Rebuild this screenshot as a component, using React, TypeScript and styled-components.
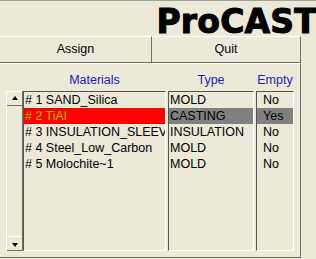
import styled, { createGlobalStyle } from "styled-components"

const Global = createGlobalStyle`
  html, body {
    margin: 0;
    padding: 0;
    background: #ece9d8;
    overflow: hidden;
  }
`

const Window = styled.div`
  width: 316px;
  height: 259px;
  box-sizing: border-box;
  border-top: 1px solid #a0a0a0;
  background: #ece9d8;
  font-family: "Liberation Sans", Arial, sans-serif;
  font-size: 12.5px;
  color: #000;
  overflow: hidden;
`

const Header = styled.div`
  height: 35px;
  display: flex;
  justify-content: flex-end;
  align-items: flex-end;
`

const Logo = styled.div`
  font-family: "DejaVu Sans", sans-serif;
  font-weight: 700;
  font-size: 33px;
  line-height: 33px;
  margin-bottom: -2px;
  margin-right: -1px;
  -webkit-text-stroke: 1px #000;
  letter-spacing: 0.2px;
  white-space: nowrap;
`

const ButtonBar = styled.div`
  width: 301px;
  display: flex;
`

const Button = styled.div<{ $w: number }>`
  width: ${(p) => p.$w}px;
  height: 27px;
  box-sizing: border-box;
  border-top: 1px solid #fff;
  border-bottom: 1px solid #716f64;
  border-right: 1px solid #716f64;
  display: flex;
  align-items: center;
  justify-content: center;
  padding-bottom: 1px;
`

const Panel = styled.div`
  width: 301px;
  height: 195px;
  box-sizing: border-box;
  border-top: 1px solid #fff;
  border-right: 1px solid #716f64;
  border-bottom: 1px solid #716f64;
  padding: 0 0 6px 6px;
  display: grid;
  grid-template-columns: 17px 143px 88px 40px;
  grid-template-rows: 27px 160px;
`

const Label = styled.div<{ $col: number; $inset?: number }>`
  grid-row: 1;
  grid-column: ${(p) => p.$col};
  margin-left: ${(p) => p.$inset ?? 0}px;
  color: #1c1cb4;
  text-align: center;
  padding-top: 9px;
  line-height: 14px;
`

const ScrollBar = styled.div`
  grid-row: 2;
  grid-column: 1;
  display: flex;
  flex-direction: column;
  box-sizing: border-box;
  border-left: 1px solid #fff;
  border-right: 1px solid #716f64;
`

const ScrollButton = styled.div<{ $down?: boolean }>`
  height: 15px;
  box-sizing: border-box;
  border-top: 1px solid #fff;
  border-bottom: 1px solid #716f64;
  display: flex;
  align-items: center;
  justify-content: center;
  &::after {
    content: "";
    width: 0;
    height: 0;
    border-left: 3px solid transparent;
    border-right: 3px solid transparent;
    ${(p) =>
      p.$down
        ? "border-top: 4px solid #000; margin-top: 2px;"
        : "border-bottom: 4px solid #000; margin-top: -1px;"}
  }
`

const Trough = styled.div`
  flex: 1;
`

const ListBox = styled.div<{ $col: number; $inset?: number }>`
  grid-row: 2;
  grid-column: ${(p) => p.$col};
  margin-left: ${(p) => p.$inset ?? 0}px;
  box-sizing: border-box;
  border-top: 1px solid #555;
  border-left: 1px solid #555;
  border-right: 1px solid #fff;
  border-bottom: 1px solid #fff;
  overflow: hidden;
`

const Row = styled.div<{ $sel?: string; $fg?: string; $pad: number }>`
  height: 16px;
  line-height: 16px;
  padding-left: ${(p) => p.$pad}px;
  white-space: nowrap;
  overflow: hidden;
  background: ${(p) => p.$sel ?? "transparent"};
  color: ${(p) => p.$fg ?? "#000"};
`

const materials = [
  { name: "# 1 SAND_Silica", type: "MOLD", empty: "No" },
  { name: "# 2 TiAl", type: "CASTING", empty: "Yes" },
  { name: "# 3 INSULATION_SLEEVE", type: "INSULATION", empty: "No" },
  { name: "# 4 Steel_Low_Carbon", type: "MOLD", empty: "No" },
  { name: "# 5 Molochite~1", type: "MOLD", empty: "No" },
]

const selected = 1

export default function App() {
  return (
    <>
      <Global />
      <Window>
        <Header>
          <Logo>ProCAST</Logo>
        </Header>
        <ButtonBar>
          <Button $w={152}>Assign</Button>
          <Button $w={149}>Quit</Button>
        </ButtonBar>
        <Panel>
          <Label $col={2}>Materials</Label>
          <Label $col={3} $inset={2}>Type</Label>
          <Label $col={4} $inset={2}>Empty</Label>
          <ScrollBar>
            <ScrollButton />
            <Trough />
            <ScrollButton $down />
          </ScrollBar>
          <ListBox $col={2}>
            {materials.map((m, i) => (
              <Row
                key={m.name}
                $pad={1}
                $sel={i === selected ? "#ff0000" : undefined}
                $fg={i === selected ? "#a4c000" : undefined}
              >
                {m.name}
              </Row>
            ))}
          </ListBox>
          <ListBox $col={3} $inset={2}>
            {materials.map((m, i) => (
              <Row key={m.name} $pad={1} $sel={i === selected ? "#808080" : undefined}>
                {m.type}
              </Row>
            ))}
          </ListBox>
          <ListBox $col={4} $inset={2}>
            {materials.map((m, i) => (
              <Row key={m.name} $pad={6} $sel={i === selected ? "#808080" : undefined}>
                {m.empty}
              </Row>
            ))}
          </ListBox>
        </Panel>
      </Window>
    </>
  )
}
